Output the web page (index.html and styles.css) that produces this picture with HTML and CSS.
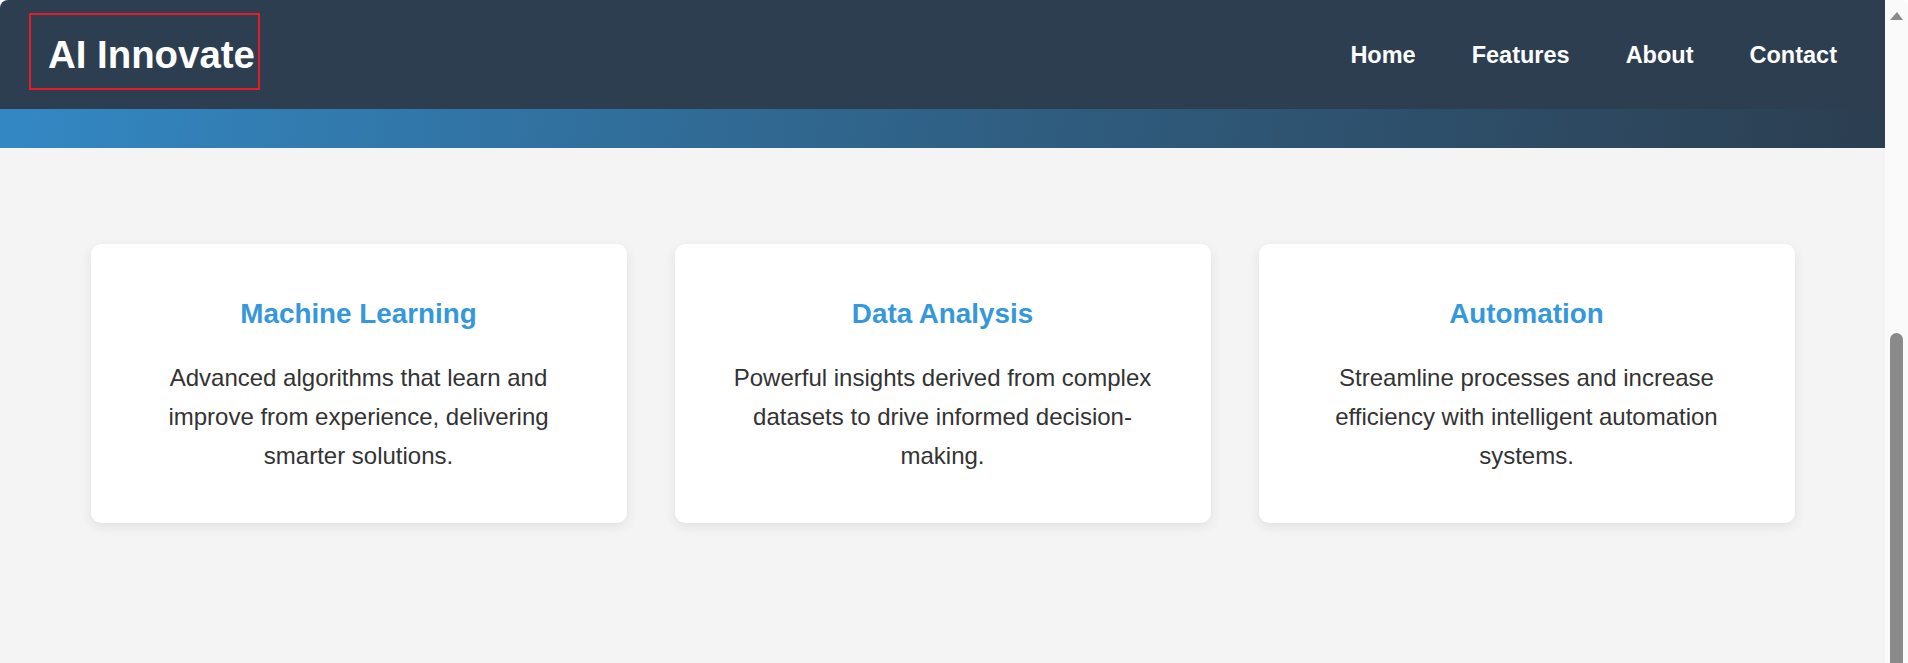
FILE: index.html
```html
<!DOCTYPE html>
<html lang="en">
<head>
<meta charset="utf-8">
<title>AI Innovate</title>
<link rel="stylesheet" href="styles.css">
</head>
<body>
<div class="window">
  <div class="viewport">
    <header class="site-header">
      <div class="logo">AI Innovate</div>
      <nav class="nav">
        <a href="#">Home</a>
        <a href="#">Features</a>
        <a href="#">About</a>
        <a href="#">Contact</a>
      </nav>
    </header>
    <div class="hero-strip"></div>
    <main class="features">
      <div class="grid">
        <article class="card">
          <h3 class="card-title">Machine Learning</h3>
          <p class="card-text">Advanced algorithms that learn and improve from experience, delivering smarter solutions.</p>
        </article>
        <article class="card">
          <h3 class="card-title">Data Analysis</h3>
          <p class="card-text">Powerful insights derived from complex datasets to drive informed decision-making.</p>
        </article>
        <article class="card">
          <h3 class="card-title">Automation</h3>
          <p class="card-text">Streamline processes and increase efficiency with intelligent automation systems.</p>
        </article>
      </div>
    </main>
  </div>
  <div class="scrollbar">
    <span class="arrow-up"></span>
    <span class="thumb"></span>
  </div>
</div>
</body>
</html>
```
FILE: styles.css
```css
* { box-sizing: border-box; }

html, body {
  margin: 0;
  height: 100%;
  background: #ffffff;
  overflow: hidden;
}

body {
  font-family: "Liberation Sans", Arial, sans-serif;
  color: #333333;
}

.window {
  display: flex;
  height: 100vh;
}

.viewport {
  flex: 1;
  display: flex;
  flex-direction: column;
  background: #f4f4f4;
  border-top-left-radius: 8px;
  overflow: hidden;
}

.site-header {
  height: 109px;
  flex: none;
  background: #2c3e50;
  display: flex;
  align-items: center;
  justify-content: space-between;
  padding: 0 48px;
}

.logo {
  position: relative;
  font-size: 38.4px;
  line-height: 44px;
  font-weight: 700;
  color: #ffffff;
}

.logo::after {
  content: "";
  position: absolute;
  top: -20px;
  left: -19px;
  right: -5px;
  bottom: -13px;
  border: 2px solid #e41e26;
  pointer-events: none;
}

.nav {
  display: flex;
  gap: 56px;
  margin-top: 2px;
}

.nav a {
  color: #ffffff;
  text-decoration: none;
  font-weight: 700;
  font-size: 23.5px;
}

.hero-strip {
  height: 39px;
  flex: none;
  background: linear-gradient(100deg, #3388c4 0%, #2f5d80 55%, #2c3e50 100%);
}

.features {
  flex: 1;
  padding-top: 96px;
}

.grid {
  width: 1704px;
  margin: 0 auto;
  display: grid;
  grid-template-columns: repeat(3, 1fr);
  gap: 48px;
}

.card {
  background: #ffffff;
  border-radius: 10px;
  box-shadow: 0 4px 12px rgba(0, 0, 0, 0.08);
  padding: 54px 48px 48px;
  text-align: center;
  height: 279px;
}

.card-title {
  margin: 0 0 29px;
  font-size: 27.8px;
  font-weight: 700;
  color: #3498db;
  line-height: 32px;
}

.card-text {
  margin: 0;
  font-size: 24px;
  line-height: 38.9px;
  color: #333333;
}

.scrollbar {
  width: 23px;
  flex: none;
  background: #fafafa;
  border-top-right-radius: 8px;
  display: flex;
  flex-direction: column;
  align-items: flex-start;
  padding-left: 5px;
}

.arrow-up {
  margin-top: 12px;
  width: 0;
  height: 0;
  border-left: 7px solid transparent;
  border-right: 6px solid transparent;
  border-bottom: 8px solid #8a8a8a;
}

.thumb {
  margin-top: 313px;
  width: 13px;
  flex: 1;
  background: #8a8a8a;
  border-radius: 7px 7px 0 0;
}
```
